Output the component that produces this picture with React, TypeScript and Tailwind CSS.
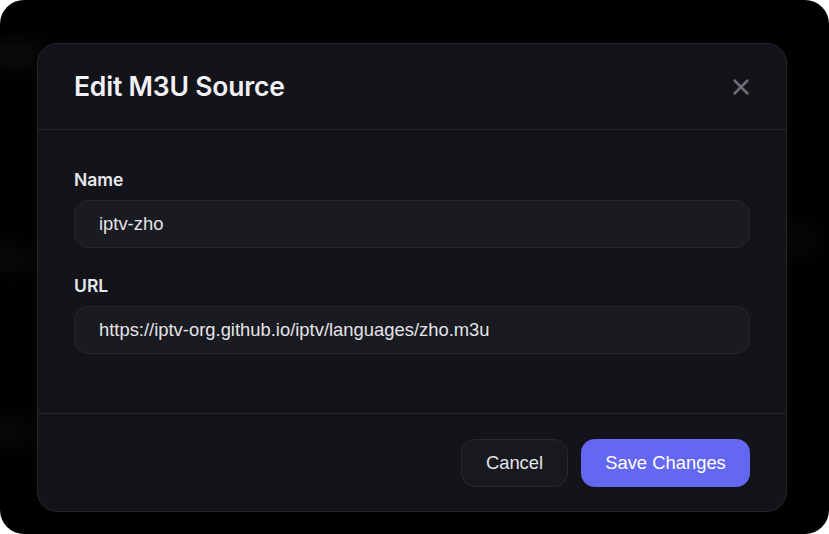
import { useState } from 'react';

function CloseIcon() {
  return (
    <svg width="26" height="26" viewBox="0 0 24 24" fill="none" stroke="currentColor" strokeWidth="2.3" strokeLinecap="round" strokeLinejoin="round">
      <path d="M18 6 6 18" />
      <path d="m6 6 12 12" />
    </svg>
  );
}

export default function App() {
  const [name, setName] = useState('iptv-zho');
  const [url, setUrl] = useState('https://iptv-org.github.io/iptv/languages/zho.m3u');

  return (
    <div className="w-[829px] h-[534px] bg-white">
      <div className="relative h-full overflow-hidden rounded-[24px] bg-black pl-[37px] pt-[43px]">
        {/* faint page content behind the overlay */}
        <div className="absolute left-[-10px] top-[48px] h-[14px] w-[50px] rounded-full bg-[#1a1a1c] blur-md" />
        <div className="absolute left-[-10px] top-[252px] h-[14px] w-[40px] rounded-full bg-[#151517] blur-md" />
        <div className="absolute left-[-10px] top-[425px] h-[14px] w-[40px] rounded-full bg-[#131315] blur-md" />
        <div className="absolute left-[792px] top-[232px] h-[16px] w-[20px] rounded-full bg-[#1a1a1c] blur-md" />

        <div className="relative flex h-[469px] w-[750px] flex-col rounded-[20px] border border-[#26262d] bg-[#13131a]">
          <div className="flex h-[86px] items-center justify-between border-b border-[#26262d] pl-9 pr-[32px]">
            <h2 className="font-['Inter',sans-serif] text-[26.5px] font-semibold tracking-[-0.2px] text-[#f2f2f5]">Edit M3U Source</h2>
            <button type="button" className="text-[#6e6e78]">
              <CloseIcon />
            </button>
          </div>

          <div className="flex-1 px-9 pt-[38px]">
            <label className="mb-2 block font-['Inter',sans-serif] text-[17.5px] leading-6 font-semibold text-[#e8e8ec]">Name</label>
            <input
              className="block h-[48px] w-full rounded-[14px] border border-[#26262d] bg-[#1a1a21] pl-6 font-['Liberation_Sans',Arial,sans-serif] text-[18.4px] text-[#e4e4e8] outline-none"
              value={name}
              onChange={e => setName(e.target.value)}
            />
            <label className="mt-[26px] mb-2 block font-['Inter',sans-serif] text-[17.5px] leading-6 font-semibold text-[#e8e8ec]">URL</label>
            <input
              className="block h-[48px] w-full rounded-[14px] border border-[#26262d] bg-[#1a1a21] pl-6 font-['Liberation_Sans',Arial,sans-serif] text-[18.4px] text-[#e4e4e8] outline-none"
              value={url}
              onChange={e => setUrl(e.target.value)}
            />
          </div>

          <div className="flex h-[98px] items-center justify-end gap-[13px] border-t border-[#26262d] pr-9 pt-[1px]">
            <button
              type="button"
              className="h-[48px] w-[107px] rounded-[14px] border border-[#28282f] bg-[#18181f] font-['Liberation_Sans',Arial,sans-serif] text-[18.4px] text-[#e4e4e8]"
            >
              Cancel
            </button>
            <button
              type="button"
              className="h-[48px] w-[169px] rounded-[14px] bg-[#6467f2] font-['Liberation_Sans',Arial,sans-serif] text-[18.4px] text-white"
            >
              Save Changes
            </button>
          </div>
        </div>
      </div>
    </div>
  );
}
